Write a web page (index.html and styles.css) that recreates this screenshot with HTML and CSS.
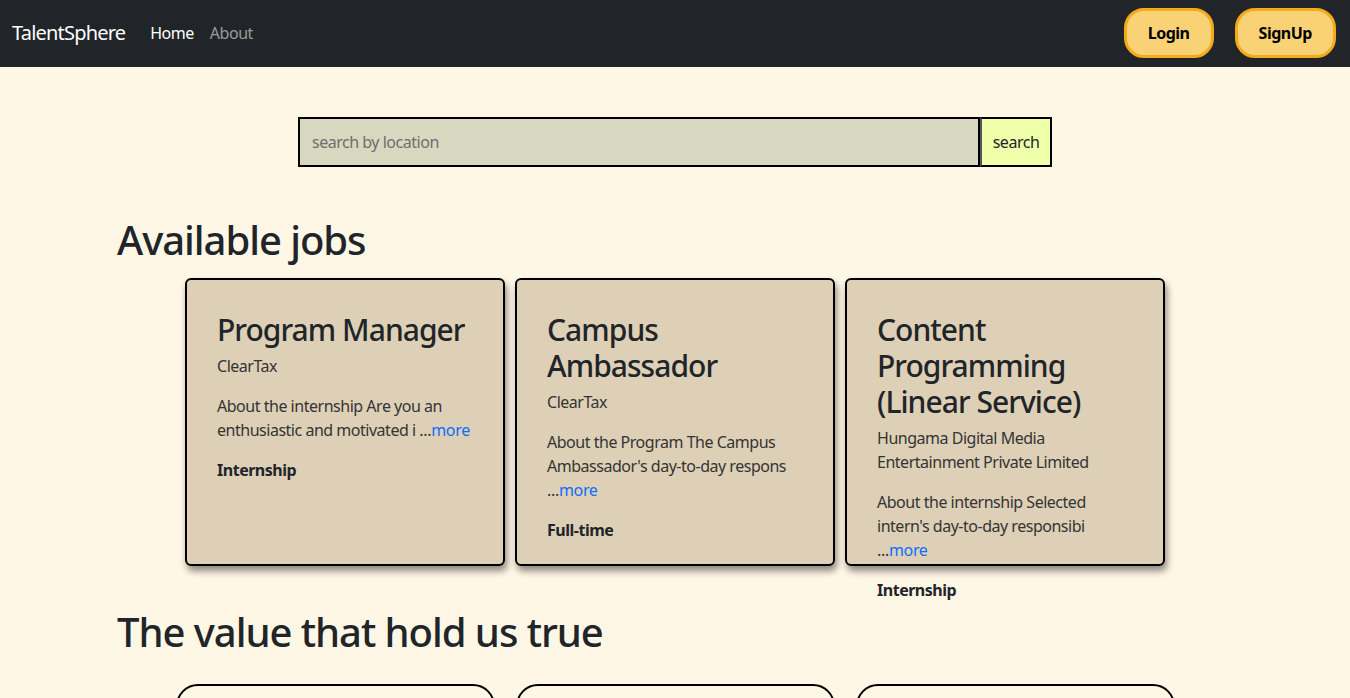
FILE: index.html
```html
<!DOCTYPE html>
<html lang="en">
<head>
<meta charset="utf-8">
<title>TalentSphere</title>
<link rel="stylesheet" href="styles.css">
</head>
<body>
<nav class="navbar">
  <div class="nav-left">
    <a class="brand" href="#">TalentSphere</a>
    <a class="nav-link active" href="#">Home</a>
    <a class="nav-link" href="#">About</a>
  </div>
  <div class="nav-right">
    <button class="nav-btn">Login</button>
    <button class="nav-btn">SignUp</button>
  </div>
</nav>
<main class="page">
  <form class="search">
    <input class="search-input" type="text" placeholder="search by location">
    <button class="search-btn" type="button">search</button>
  </form>
  <div class="container">
    <h1 class="section-title">Available jobs</h1>
    <div class="jobs">
      <div class="job-card">
        <h2 class="job-title">Program Manager</h2>
        <p class="job-company">ClearTax</p>
        <p class="job-desc">About the internship Are you an enthusiastic and motivated i <a class="more" href="#"><span class="dots">...</span>more</a></p>
        <p class="job-type">Internship</p>
      </div>
      <div class="job-card">
        <h2 class="job-title">Campus Ambassador</h2>
        <p class="job-company">ClearTax</p>
        <p class="job-desc">About the Program The Campus Ambassador's day-to-day respons <a class="more" href="#"><span class="dots">...</span>more</a></p>
        <p class="job-type">Full-time</p>
      </div>
      <div class="job-card">
        <h2 class="job-title">Content Programming (Linear Service)</h2>
        <p class="job-company">Hungama Digital Media Entertainment Private Limited</p>
        <p class="job-desc">About the internship Selected intern's day-to-day responsibi <a class="more" href="#"><span class="dots">...</span>more</a></p>
        <p class="job-type">Internship</p>
      </div>
    </div>
    <h1 class="section-title values-title">The value that hold us true</h1>
    <div class="values">
      <div class="value-card"></div>
      <div class="value-card"></div>
      <div class="value-card"></div>
    </div>
  </div>
</main>
</body>
</html>
```

FILE: styles.css
```css
* { box-sizing: border-box; }
html, body { margin: 0; padding: 0; }
body {
  background: #fef7e5;
  color: #212529;
  font-family: "Noto Sans", "Open Sans", sans-serif;
  font-size: 16px;
  line-height: 1.5;
  letter-spacing: -0.03em;
}
.navbar {
  height: 67px;
  background: #212529;
  display: flex;
  align-items: center;
  justify-content: space-between;
  padding: 0 14px 1px 12px;
}
.nav-left { display: flex; align-items: center; }
.brand {
  color: #fff;
  font-size: 20px;
  letter-spacing: -0.04em;
  text-decoration: none;
  margin-right: 25px;
}
.nav-link {
  color: rgba(255,255,255,0.55);
  text-decoration: none;
  font-size: 16px;
  margin-right: 16px;
}
.nav-link.active { color: #fff; }
.nav-right { display: flex; gap: 21px; align-items: center; }
.nav-btn {
  height: 50px;
  padding: 0 21px;
  background: #f9d276;
  border: 3px solid #f5ab19;
  border-radius: 20px;
  font-family: inherit;
  font-size: 16px;
  font-weight: 700;
  letter-spacing: -0.03em;
  color: #000;
}
.page { padding-top: 50px; }
.search {
  display: flex;
  justify-content: center;
  margin: 0 0 49px;
}
.search-input {
  width: 682px;
  height: 50px;
  border: 2px solid #000;
  background: #d8d8c0;
  padding: 0 12px;
  font-family: inherit;
  font-size: 16px;
  letter-spacing: -0.03em;
  outline: none;
}
.search-input::placeholder { color: #6e6e6a; }
.search-btn {
  width: 72px;
  height: 50px;
  background: #efffaa;
  border: 2px solid #000;
  border-left-color: #555;
  font-family: inherit;
  font-size: 16px;
  letter-spacing: -0.03em;
  color: #212529;
}
.container {
  width: 1140px;
  margin: 0 auto;
  padding: 0 12px;
}
.section-title {
  font-size: 40px;
  font-weight: 500;
  line-height: 1.2;
  letter-spacing: -0.026em;
  margin: 0 0 14px;
}
.jobs {
  display: flex;
  justify-content: center;
  gap: 10px;
}
.job-card {
  width: 320px;
  height: 288px;
  background: #ddd0b6;
  border: 2px solid #000;
  border-radius: 6px;
  box-shadow: 2px 5px 7px rgba(0,0,0,0.45);
  padding: 32px 30px;
}
.job-title {
  font-size: 30px;
  font-weight: 500;
  line-height: 1.2;
  letter-spacing: -0.032em;
  margin: 0 0 6px;
}
.job-company {
  margin: 0 0 16px;
  color: #343434;
}
.job-desc {
  margin: 0 0 16px;
  color: #343434;
}
.more { color: #0d6efd; text-decoration: none; letter-spacing: -0.02em; }
.more .dots { color: #343434; }
.job-type {
  margin: 0;
  font-weight: 700;
}
.values-title { margin: 42px 0 28px; }
.values {
  display: flex;
  justify-content: center;
  gap: 21px;
}
.value-card {
  width: 319px;
  height: 200px;
  border: 2px solid #000;
  border-radius: 22px;
}
```
